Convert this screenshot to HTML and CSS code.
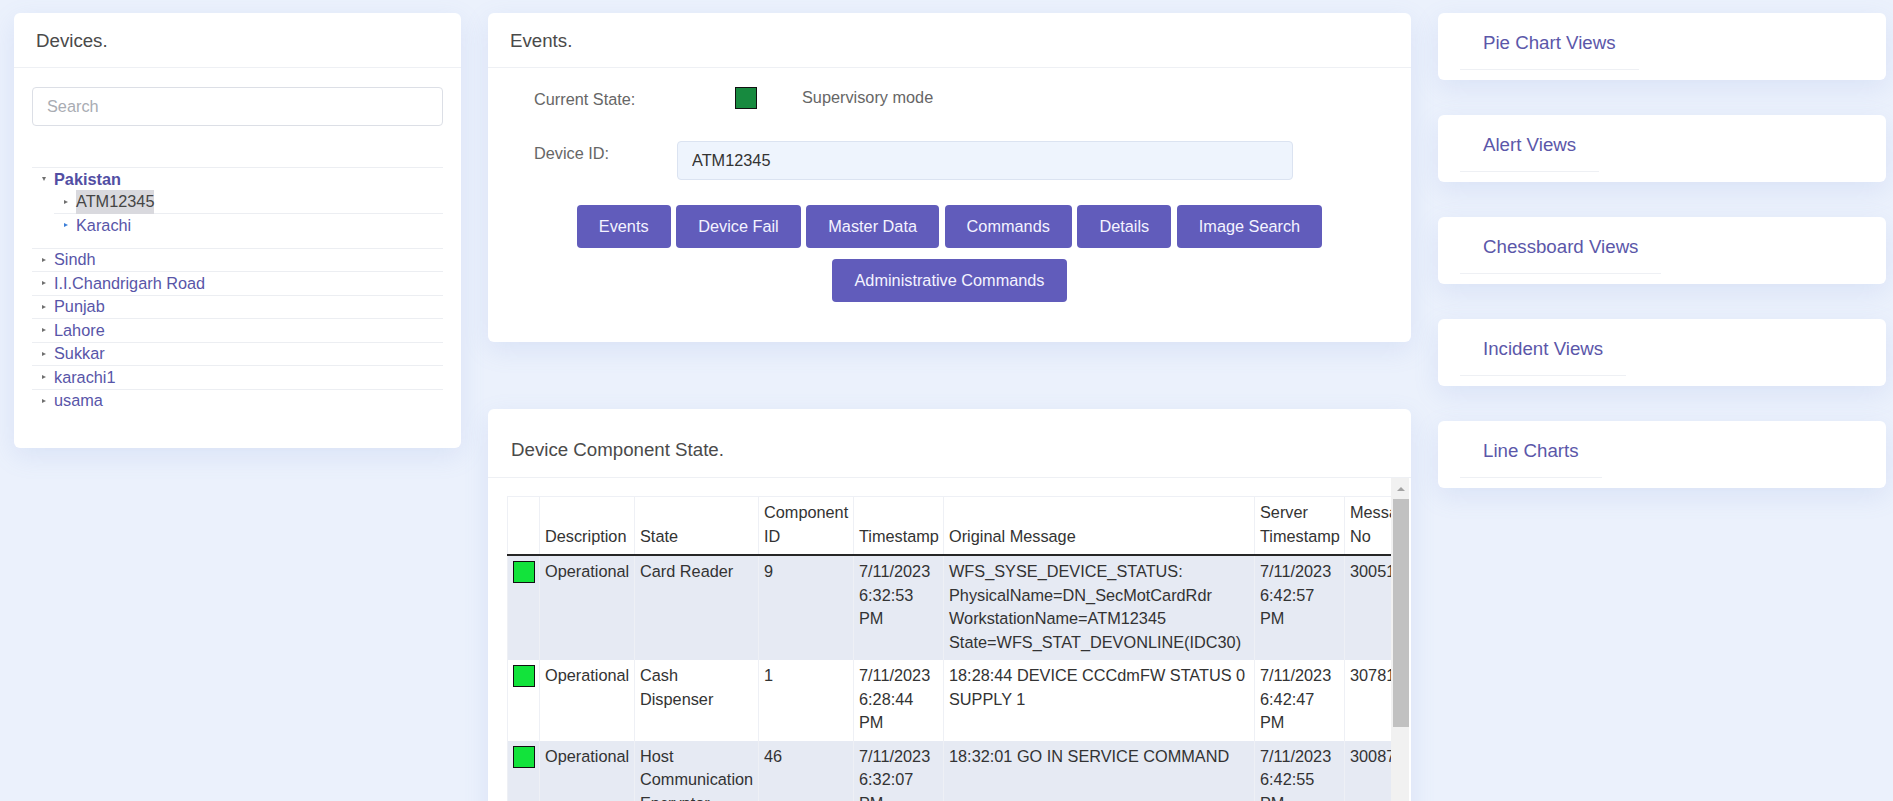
FILE: index.html
```html
<!DOCTYPE html>
<html lang="en">
<head>
<meta charset="utf-8">
<title>Device Dashboard</title>
<link rel="stylesheet" href="styles.css">
</head>
<body>
<div class="page">
  <div class="col">
    <section class="card">
      <div class="card-head">Devices.</div>
      <div class="card-body devices-body">
        <input class="search" type="text" placeholder="Search">
        <ul class="tree">
          <li>
            <div class="node"><i class="caret caret-down"></i><span class="label strong">Pakistan</span></div>
            <ul class="subtree">
              <li><div class="node"><i class="caret"></i><span class="label selected">ATM12345</span></div></li>
              <li><div class="node"><i class="caret caret-blue"></i><span class="label">Karachi</span></div></li>
            </ul>
          </li>
          <li><div class="node"><i class="caret"></i><span class="label">Sindh</span></div></li>
          <li><div class="node"><i class="caret"></i><span class="label">I.I.Chandrigarh Road</span></div></li>
          <li><div class="node"><i class="caret"></i><span class="label">Punjab</span></div></li>
          <li><div class="node"><i class="caret"></i><span class="label">Lahore</span></div></li>
          <li><div class="node"><i class="caret"></i><span class="label">Sukkar</span></div></li>
          <li><div class="node"><i class="caret"></i><span class="label">karachi1</span></div></li>
          <li><div class="node"><i class="caret"></i><span class="label">usama</span></div></li>
        </ul>
      </div>
    </section>
  </div>

  <div class="col">
    <section class="card">
      <div class="card-head">Events.</div>
      <div class="card-body events-body">
        <div class="state-row">
          <span class="field-label state-label">Current State:</span>
          <span class="state-box"></span>
          <span class="state-text">Supervisory mode</span>
        </div>
        <div class="id-row">
          <span class="field-label id-label">Device ID:</span>
          <input class="id-input" type="text" value="ATM12345">
        </div>
        <div class="actions">
          <button class="btn">Events</button>
          <button class="btn">Device Fail</button>
          <button class="btn">Master Data</button>
          <button class="btn">Commands</button>
          <button class="btn">Details</button>
          <button class="btn">Image Search</button>
          <button class="btn">Administrative Commands</button>
        </div>
      </div>
    </section>

    <section class="card dcs-card">
      <div class="card-head dcs-head">Device Component State.</div>
      <div class="table-scroll">
        <div class="table-viewport">
          <table class="grid">
            <colgroup>
              <col class="w-ind"><col class="w-desc"><col class="w-state"><col class="w-cid"><col class="w-ts"><col class="w-msg"><col class="w-sts"><col class="w-no">
            </colgroup>
            <thead>
              <tr>
                <th></th><th>Description</th><th>State</th><th>Component ID</th><th>Timestamp</th><th>Original Message</th><th>Server Timestamp</th><th>Message No</th>
              </tr>
            </thead>
            <tbody>
              <tr>
                <td><span class="ok-box"></span></td><td>Operational</td><td>Card Reader</td><td>9</td><td>7/11/2023 6:32:53 PM</td>
                <td>WFS_SYSE_DEVICE_STATUS: PhysicalName=DN_SecMotCardRdr WorkstationName=ATM12345 State=WFS_STAT_DEVONLINE(IDC30)</td>
                <td>7/11/2023 6:42:57 PM</td><td>300511</td>
              </tr>
              <tr>
                <td><span class="ok-box"></span></td><td>Operational</td><td>Cash<br>Dispenser</td><td>1</td><td>7/11/2023 6:28:44 PM</td>
                <td>18:28:44 DEVICE CCCdmFW STATUS 0 SUPPLY 1</td>
                <td>7/11/2023 6:42:47 PM</td><td>307811</td>
              </tr>
              <tr>
                <td><span class="ok-box"></span></td><td>Operational</td><td>Host Communication Encryptor</td><td>46</td><td>7/11/2023 6:32:07 PM</td>
                <td>18:32:01 GO IN SERVICE COMMAND</td>
                <td>7/11/2023 6:42:55 PM</td><td>300877</td>
              </tr>
              <tr>
                <td><span class="ok-box"></span></td><td>Operational</td><td>Receipt Printer</td><td>3</td><td>7/11/2023 6:30:12 PM</td>
                <td>18:30:12 DEVICE PRR STATUS 0</td>
                <td>7/11/2023 6:42:51 PM</td><td>300912</td>
              </tr>
              <tr>
                <td><span class="ok-box"></span></td><td>Operational</td><td>Journal Printer</td><td>4</td><td>7/11/2023 6:30:15 PM</td>
                <td>18:30:15 DEVICE JPR STATUS 0</td>
                <td>7/11/2023 6:42:52 PM</td><td>300913</td>
              </tr>
            </tbody>
          </table>
        </div>
        <div class="vscroll" aria-hidden="true">
          <span class="vscroll-up"></span>
          <span class="vscroll-thumb"></span>
        </div>
      </div>
    </section>
  </div>

  <div class="col">
    <div class="view-card"><a class="view-link" href="#">Pie Chart Views</a></div>
    <div class="view-card"><a class="view-link" href="#">Alert Views</a></div>
    <div class="view-card"><a class="view-link" href="#">Chessboard Views</a></div>
    <div class="view-card"><a class="view-link" href="#">Incident Views</a></div>
    <div class="view-card"><a class="view-link" href="#">Line Charts</a></div>
  </div>
</div>
</body>
</html>
```

FILE: styles.css
```css
html, body {
  margin: 0;
  padding: 0;
}

body {
  background: #ebf1fc;
  font-family: "Liberation Sans", Arial, sans-serif;
  font-size: 16.3px;
  line-height: 23.5px;
  color: #333;
  overflow: hidden;
  height: 801px;
}

.page {
  display: grid;
  grid-template-columns: 447px 923px 448px;
  column-gap: 27px;
  padding: 13px 7px 0 14px;
  align-items: start;
}

.col {
  display: flex;
  flex-direction: column;
}

.card {
  background: #fff;
  border-radius: 6px;
  box-shadow: 0 8px 26px rgba(110, 140, 215, 0.14);
}

.card-head {
  padding: 14px 22px 13px;
  font-size: 18.7px;
  line-height: 27px;
  color: #4a4a4a;
  border-bottom: 1px solid #eef0f4;
}

/* Devices */
.devices-body {
  padding: 19px 18px 36px;
}

.search {
  display: block;
  box-sizing: border-box;
  width: 100%;
  height: 39px;
  padding: 0 14px;
  border: 1px solid #dcdfe6;
  border-radius: 4px;
  font-family: inherit;
  font-size: 16.3px;
  color: #333;
  outline: none;
}

.search::placeholder {
  color: #a9acb3;
}

.tree {
  list-style: none;
  margin: 41px 0 0;
  padding: 0;
  border-top: 1px solid #eceef2;
}

.tree .subtree {
  list-style: none;
  margin: 0 0 11px 22px;
  padding: 0;
}

.tree li + li {
  border-top: 1px solid #eceef2;
}

.node {
  display: flex;
  align-items: center;
  height: 22.5px;
}

.caret {
  flex: none;
  box-sizing: border-box;
  width: 22px;
  height: 22px;
  padding-left: 10px;
  display: flex;
  align-items: center;
}

.caret::before {
  content: "";
  width: 0;
  height: 0;
  border-left: 4px solid #707070;
  border-top: 2.5px solid transparent;
  border-bottom: 2.5px solid transparent;
}

.caret-down::before {
  border-left: 2.5px solid transparent;
  border-right: 2.5px solid transparent;
  border-top: 4px solid #707070;
  border-bottom: 0;
}

.caret-blue::before {
  border-left-color: #3c7fd8;
}

.label {
  color: #5855a8;
  white-space: nowrap;
}

.label.strong {
  font-weight: bold;
  color: #524ea3;
}

.label.selected {
  background: #d9d9de;
  color: #454545;
}

/* Events */
.events-body {
  padding: 19px 46px 40px;
}

.field-label {
  color: #666;
}

.state-row {
  display: flex;
  align-items: center;
  height: 22px;
}

.state-label {
  width: 201px;
  padding-top: 3px;
}

.state-box {
  box-sizing: border-box;
  width: 22px;
  height: 22px;
  background: #178a3f;
  border: 1px solid #111;
}

.state-text {
  margin-left: 45px;
  color: #666;
}

.id-row {
  display: flex;
  align-items: flex-start;
  margin-top: 32px;
}

.id-label {
  width: 143px;
  padding-top: 1px;
}

.id-input {
  box-sizing: border-box;
  width: 616px;
  height: 39px;
  padding: 0 14px;
  background: #eef4fd;
  border: 1px solid #dbe3f1;
  border-radius: 4px;
  font-family: inherit;
  font-size: 16.3px;
  color: #333;
  outline: none;
}

.actions {
  display: flex;
  flex-wrap: wrap;
  justify-content: center;
  gap: 11px 5.6px;
  margin-top: 25px;
}

.btn {
  height: 43px;
  padding: 0 22px;
  background: #615cbb;
  color: #f4f3ff;
  border: 0;
  border-radius: 4px;
  font-family: inherit;
  font-size: 16.3px;
  line-height: 23.5px;
  cursor: pointer;
}

/* Device Component State */
.dcs-card {
  margin-top: 67px;
}

.dcs-head {
  padding: 27px 23px 14px;
}

.table-scroll {
  display: flex;
  height: 420px;
  margin: 0 2px 0 19px;
}

.table-viewport {
  flex: 1;
  min-width: 0;
  overflow: hidden;
  padding-top: 18px;
}

.vscroll {
  flex: none;
  width: 18px;
  background: #f1f1f1;
  display: flex;
  flex-direction: column;
}

.vscroll-up {
  height: 21px;
  display: flex;
  justify-content: center;
  align-items: center;
}

.vscroll-up::before {
  content: "";
  width: 0;
  height: 0;
  border-left: 4px solid transparent;
  border-right: 4px solid transparent;
  border-bottom: 4px solid #a3a3a3;
  margin-left: 1px;
}

.vscroll-thumb {
  height: 228px;
  margin-left: 2px;
  background: #c1c1c1;
}

.grid {
  table-layout: fixed;
  width: 917px;
  border-collapse: collapse;
  font-size: 16.3px;
  line-height: 23.5px;
  color: #333;
}

.w-ind { width: 32px; }
.w-desc { width: 95px; }
.w-state { width: 124px; }
.w-cid { width: 95px; }
.w-ts { width: 90px; }
.w-msg { width: 311px; }
.w-sts { width: 90px; }
.w-no { width: 80px; }

.grid th,
.grid td {
  padding: 4px 5px 6px;
  text-align: left;
  border-left: 1px solid #eef0f5;
  border-right: 1px solid #eef0f5;
  overflow: hidden;
}

.grid th {
  font-weight: normal;
  vertical-align: bottom;
  border-top: 1px solid #eef0f5;
  border-bottom: 2px solid #262626;
}

.grid td {
  vertical-align: top;
}

.grid tbody tr:nth-child(odd) td {
  background: #e6eaf3;
}

.ok-box {
  display: block;
  box-sizing: border-box;
  width: 22px;
  height: 22px;
  margin-top: 1px;
  background: #12e33b;
  border: 1px solid #111;
}

/* Right column */
.view-card {
  box-sizing: border-box;
  height: 67px;
  margin-bottom: 35px;
  padding: 16px 22px 10px;
  background: #fff;
  border-radius: 6px;
  box-shadow: 0 8px 26px rgba(110, 140, 215, 0.14);
}

.view-link {
  display: inline-block;
  padding: 0 23px 13px;
  font-size: 18.7px;
  line-height: 27px;
  color: #5b57a9;
  text-decoration: none;
  border-bottom: 1px solid #eef0f4;
}
```
